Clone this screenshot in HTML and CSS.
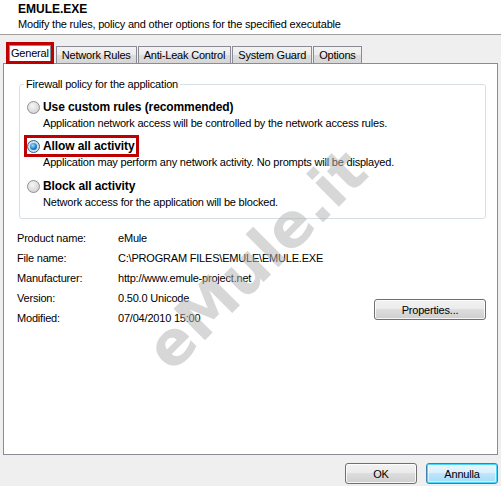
FILE: index.html
```html
<!DOCTYPE html>
<html lang="en">
<head>
    <meta charset="UTF-8">
    <title>EMULE.EXE - Properties</title>
    <link rel="stylesheet" href="styles.css">
</head>
<body>
    <div class="dialog">
        <div class="head">
            <div class="head-title">EMULE.EXE</div>
            <div class="head-sub">Modify the rules, policy and other options for the specified executable</div>
        </div>

        <div class="main">
            <div class="tabs">
                <div class="tab active marked">General</div>
                <div class="tab">Network Rules</div>
                <div class="tab">Anti-Leak Control</div>
                <div class="tab">System Guard</div>
                <div class="tab">Options</div>
            </div>

            <div class="panel">
                <fieldset class="group">
                    <legend>Firewall policy for the application</legend>

                    <div class="choice">
                        <div class="choice-line">
                            <span class="radio"></span>
                            <span class="choice-label">Use custom rules (recommended)</span>
                        </div>
                        <div class="choice-desc">Application network access will be controlled by the network access rules.</div>
                    </div>

                    <div class="choice">
                        <div class="choice-line marked">
                            <span class="radio checked"></span>
                            <span class="choice-label">Allow all activity</span>
                        </div>
                        <div class="choice-desc">Application may perform any network activity. No prompts will be displayed.</div>
                    </div>

                    <div class="choice">
                        <div class="choice-line">
                            <span class="radio"></span>
                            <span class="choice-label">Block all activity</span>
                        </div>
                        <div class="choice-desc">Network access for the application will be blocked.</div>
                    </div>
                </fieldset>

                <div class="info">
                    <div class="info-grid">
                        <span>Product name:</span><span>eMule</span>
                        <span>File name:</span><span>C:\PROGRAM FILES\EMULE\EMULE.EXE</span>
                        <span>Manufacturer:</span><span>http://www.emule-project.net</span>
                        <span>Version:</span><span>0.50.0 Unicode</span>
                        <span>Modified:</span><span>07/04/2010 15:00</span>
                    </div>
                    <button class="btn btn-props">Properties...</button>
                </div>
            </div>
        </div>

        <div class="foot">
            <button class="btn btn-ok">OK</button>
            <button class="btn btn-ok default">Annulla</button>
        </div>

        <div class="watermark">eMule.it</div>
    </div>
</body>
</html>
```

FILE: styles.css
```css
* {
    box-sizing: border-box;
}
html, body {
    margin: 0;
    padding: 0;
}
body {
    font-family: "Liberation Sans", Arial, sans-serif;
    font-size: 11px;
    letter-spacing: -0.2px;
    color: #000;
    background: #efefef;
}
.dialog {
    position: relative;
    width: 501px;
    height: 486px;
    display: flex;
    flex-direction: column;
    overflow: hidden;
}
.head {
    background: #fff;
    border-bottom: 1px solid #a0a0a0;
    padding: 2px 18px 0;
    height: 35px;
}
.head-title {
    font-weight: bold;
    font-size: 12px;
    line-height: 15px;
    letter-spacing: 0;
}
.head-sub {
    line-height: 15px;
}

/* tabs + page */
.main {
    padding: 0 3px;
}
.tabs {
    display: flex;
    align-items: flex-end;
    height: 28px;
    padding-left: 6px;
    position: relative;
    z-index: 1;
}
.tab {
    height: 17px;
    line-height: 16px;
    padding: 0 5px;
    margin-left: 1px;
    border: 1px solid #898c95;
    border-bottom: none;
    background: linear-gradient(#f3f3f3, #ebebeb 50%, #dddddd 51%, #d6d6d6);
    white-space: nowrap;
}
.tab.active {
    position: relative;
    height: 19px;
    line-height: 15px;
    margin: 0 4px -1px 0;
    padding: 0 1px;
    background: #fff;
}
.tab.active.marked::after {
    content: "";
    position: absolute;
    left: -4px;
    right: -4px;
    top: -4px;
    bottom: 0;
    border: 3px solid #c00000;
}
.panel {
    background: #fff;
    border: 1px solid #898c95;
    height: 392px;
    padding: 13px 11px 0 15px;
}
.group {
    margin: 0;
    border: 1px solid #d5dfe5;
    border-radius: 3px;
    padding: 8px 0 8px 7px;
}
.group legend {
    padding: 0 2px;
    margin-left: -3px;
    line-height: 14px;
}
.choice {
    height: 39px;
}
.choice:last-child {
    height: 32px;
    margin-top: 1px;
}
.choice-line {
    position: relative;
    display: flex;
    align-items: center;
    gap: 3px;
    width: fit-content;
    height: 16px;
    padding-right: 1px;
}
.choice-line.marked::after {
    content: "";
    position: absolute;
    inset: -3px;
    border: 3px solid #c00000;
}
.choice-label {
    font-weight: bold;
    font-size: 12px;
    letter-spacing: -0.1px;
}
.choice-desc {
    padding-left: 16px;
    line-height: 16px;
}
.radio {
    position: relative;
    width: 13px;
    height: 13px;
    border-radius: 50%;
    border: 1px solid #8e8f8f;
    background: radial-gradient(circle at 40% 35%, #f6f6f6, #d9d9d9 65%, #c4c4c4);
}
.radio.checked {
    border-color: #2c628b;
    background: radial-gradient(circle, #eef5fb, #bcd6ea 85%);
}
.radio.checked::after {
    content: "";
    position: absolute;
    left: 2px;
    top: 2px;
    width: 7px;
    height: 7px;
    border-radius: 50%;
    background: radial-gradient(circle at 40% 35%, #a6def9, #1b80c9 55%, #0d3f72);
}

/* file details */
.info {
    display: flex;
    align-items: flex-end;
    justify-content: space-between;
    margin: 9px 0 0 -2px;
}
.info-grid {
    display: grid;
    grid-template-columns: 101px auto;
    grid-auto-rows: 20px;
    line-height: 20px;
}

/* buttons */
.btn {
    font-family: "Liberation Sans", Arial, sans-serif;
    font-size: 11px;
    letter-spacing: -0.2px;
    color: #000;
    height: 21px;
    padding: 0;
    border: 1px solid #707070;
    border-radius: 3px;
    background: linear-gradient(#f2f2f2, #ebebeb 45%, #dddddd 50%, #cfcfcf);
    box-shadow: inset 0 0 0 1px rgba(255, 255, 255, 0.8);
}
.btn-props {
    width: 112px;
    margin-bottom: 8px;
}
.foot {
    display: flex;
    justify-content: flex-end;
    gap: 9px;
    padding: 8px 3px 0;
}
.btn-ok {
    width: 72px;
}
.btn.default {
    border-color: #3c7fb1;
    box-shadow: inset 0 0 0 1px #48d8fb, inset 0 0 0 2px rgba(255, 255, 255, 0.5);
    background: linear-gradient(#eaf6fd, #d9f0fc 45%, #bee6fd 50%, #a7d9f5);
}

/* site watermark over the screenshot */
.watermark {
    position: absolute;
    left: 256px;
    top: 259px;
    font-family: "DejaVu Sans", sans-serif;
    font-weight: bold;
    font-size: 61px;
    letter-spacing: 0;
    line-height: 1;
    color: rgba(175, 175, 175, 0.5);
    transform: translate(-50%, -50%) rotate(-45deg);
    white-space: nowrap;
    pointer-events: none;
}
```
